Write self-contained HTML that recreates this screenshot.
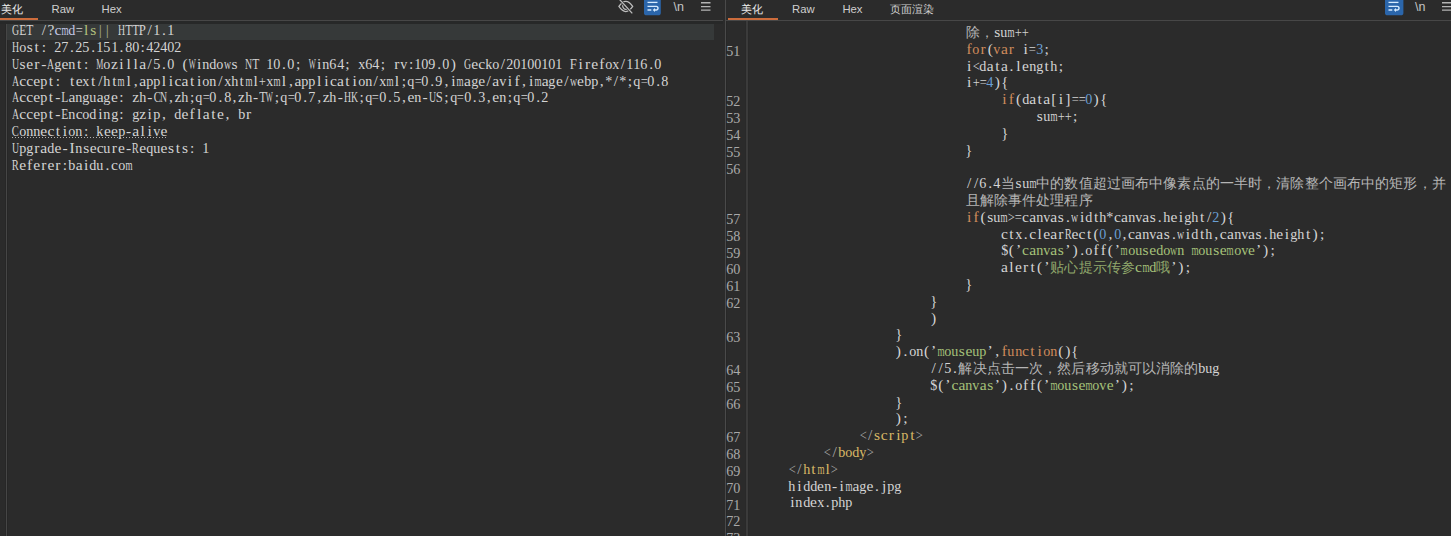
<!DOCTYPE html>
<html><head><meta charset="utf-8"><style>
html,body{margin:0;padding:0}
body{width:1451px;height:536px;overflow:hidden;position:relative;background:#2b2b2b}
.bx{position:absolute}
.r{position:absolute;white-space:nowrap;font-family:"Liberation Serif",serif;font-size:15.5px;line-height:17px;color:#d4d4d4}
.r b{font-weight:normal;display:inline-block;width:7.07px;text-align:center;white-space:pre}
.r b s{text-decoration:none;display:inline-block}
.r u{text-decoration:none;display:inline-block;width:14.14px;text-align:center;font-size:13.5px;position:relative;top:-0.5px;opacity:0.82}
.ln{color:#a9a9a9}
.tab{position:absolute;top:0;font-family:"Liberation Sans",sans-serif;font-size:11.3px;line-height:20px;color:#cfcfcf;white-space:pre}
</style></head><body>
<div class="bx" style="left:5px;top:21px;width:1px;height:515px;background:#272727"></div><div class="bx" style="left:6px;top:21px;width:1px;height:515px;background:#464646"></div><div class="bx" style="left:7px;top:21px;width:1px;height:515px;background:#272727"></div><div class="bx" style="left:745px;top:21px;width:1px;height:515px;background:#292929"></div><div class="bx" style="left:746px;top:21px;width:2px;height:515px;background:#3b3b3b"></div><div class="bx" style="left:748px;top:21px;width:1px;height:515px;background:#292929"></div><div class="bx" style="left:726px;top:21px;width:1px;height:515px;background:#272727"></div><div class="bx" style="left:7px;top:24px;width:706.5px;height:16px;background:#363939"></div><div class="bx" style="left:0;top:21px;width:722.5px;height:2.5px;background:#272828"></div><div class="r" style="left:12.00px;top:21.20px"><b><s style="margin-left:-2.06px;transform:scaleX(0.632)">G</s></b><b><s style="margin-left:-1.20px;transform:scaleX(0.747)">E</s></b><b><s style="margin-left:-1.20px;transform:scaleX(0.747)">T</s></b><b> </b><b>/</b><b>?</b><span style="color:#c3c8e6"><b>c</b><b><s style="margin-left:-2.49px;transform:scaleX(0.586)">m</s></b><b><s style="margin-left:-0.34px;transform:scaleX(0.912)">d</s></b></span><b><s style="margin-left:-0.84px;transform:scaleX(0.809)">=</s></b><span style="color:#b3c17f"><b>l</b><b>s</b></span><span style="color:#a7aa8e"><b>|</b><b>|</b></span><b> </b><b><s style="margin-left:-2.06px;transform:scaleX(0.632)">H</s></b><b><s style="margin-left:-1.20px;transform:scaleX(0.747)">T</s></b><b><s style="margin-left:-1.20px;transform:scaleX(0.747)">T</s></b><b><s style="margin-left:-0.78px;transform:scaleX(0.820)">P</s></b><b>/</b><b><s style="margin-left:-0.34px;transform:scaleX(0.912)">1</s></b><b>.</b><b><s style="margin-left:-0.34px;transform:scaleX(0.912)">1</s></b></div>
<div class="r" style="left:12.00px;top:38.00px"><b><s style="margin-left:-2.06px;transform:scaleX(0.632)">H</s></b><b><s style="margin-left:-0.34px;transform:scaleX(0.912)">o</s></b><b>s</b><b>t</b><b>:</b><b> </b><b><s style="margin-left:-0.34px;transform:scaleX(0.912)">2</s></b><b><s style="margin-left:-0.34px;transform:scaleX(0.912)">7</s></b><b>.</b><b><s style="margin-left:-0.34px;transform:scaleX(0.912)">2</s></b><b><s style="margin-left:-0.34px;transform:scaleX(0.912)">5</s></b><b>.</b><b><s style="margin-left:-0.34px;transform:scaleX(0.912)">1</s></b><b><s style="margin-left:-0.34px;transform:scaleX(0.912)">5</s></b><b><s style="margin-left:-0.34px;transform:scaleX(0.912)">1</s></b><b>.</b><b><s style="margin-left:-0.34px;transform:scaleX(0.912)">8</s></b><b><s style="margin-left:-0.34px;transform:scaleX(0.912)">0</s></b><b>:</b><b><s style="margin-left:-0.34px;transform:scaleX(0.912)">4</s></b><b><s style="margin-left:-0.34px;transform:scaleX(0.912)">2</s></b><b><s style="margin-left:-0.34px;transform:scaleX(0.912)">4</s></b><b><s style="margin-left:-0.34px;transform:scaleX(0.912)">0</s></b><b><s style="margin-left:-0.34px;transform:scaleX(0.912)">2</s></b></div>
<div class="r" style="left:12.00px;top:54.80px"><b><s style="margin-left:-2.06px;transform:scaleX(0.632)">U</s></b><b>s</b><b>e</b><b>r</b><b>-</b><b><s style="margin-left:-2.06px;transform:scaleX(0.632)">A</s></b><b><s style="margin-left:-0.34px;transform:scaleX(0.912)">g</s></b><b>e</b><b><s style="margin-left:-0.34px;transform:scaleX(0.912)">n</s></b><b>t</b><b>:</b><b> </b><b><s style="margin-left:-3.36px;transform:scaleX(0.513)">M</s></b><b><s style="margin-left:-0.34px;transform:scaleX(0.912)">o</s></b><b>z</b><b>i</b><b>l</b><b>l</b><b>a</b><b>/</b><b><s style="margin-left:-0.34px;transform:scaleX(0.912)">5</s></b><b>.</b><b><s style="margin-left:-0.34px;transform:scaleX(0.912)">0</s></b><b> </b><b>(</b><b><s style="margin-left:-3.78px;transform:scaleX(0.483)">W</s></b><b>i</b><b><s style="margin-left:-0.34px;transform:scaleX(0.912)">n</s></b><b><s style="margin-left:-0.34px;transform:scaleX(0.912)">d</s></b><b><s style="margin-left:-0.34px;transform:scaleX(0.912)">o</s></b><b><s style="margin-left:-2.06px;transform:scaleX(0.632)">w</s></b><b>s</b><b> </b><b><s style="margin-left:-2.06px;transform:scaleX(0.632)">N</s></b><b><s style="margin-left:-1.20px;transform:scaleX(0.747)">T</s></b><b> </b><b><s style="margin-left:-0.34px;transform:scaleX(0.912)">1</s></b><b><s style="margin-left:-0.34px;transform:scaleX(0.912)">0</s></b><b>.</b><b><s style="margin-left:-0.34px;transform:scaleX(0.912)">0</s></b><b>;</b><b> </b><b><s style="margin-left:-3.78px;transform:scaleX(0.483)">W</s></b><b>i</b><b><s style="margin-left:-0.34px;transform:scaleX(0.912)">n</s></b><b><s style="margin-left:-0.34px;transform:scaleX(0.912)">6</s></b><b><s style="margin-left:-0.34px;transform:scaleX(0.912)">4</s></b><b>;</b><b> </b><b><s style="margin-left:-0.34px;transform:scaleX(0.912)">x</s></b><b><s style="margin-left:-0.34px;transform:scaleX(0.912)">6</s></b><b><s style="margin-left:-0.34px;transform:scaleX(0.912)">4</s></b><b>;</b><b> </b><b>r</b><b><s style="margin-left:-0.34px;transform:scaleX(0.912)">v</s></b><b>:</b><b><s style="margin-left:-0.34px;transform:scaleX(0.912)">1</s></b><b><s style="margin-left:-0.34px;transform:scaleX(0.912)">0</s></b><b><s style="margin-left:-0.34px;transform:scaleX(0.912)">9</s></b><b>.</b><b><s style="margin-left:-0.34px;transform:scaleX(0.912)">0</s></b><b>)</b><b> </b><b><s style="margin-left:-2.06px;transform:scaleX(0.632)">G</s></b><b>e</b><b>c</b><b><s style="margin-left:-0.34px;transform:scaleX(0.912)">k</s></b><b><s style="margin-left:-0.34px;transform:scaleX(0.912)">o</s></b><b>/</b><b><s style="margin-left:-0.34px;transform:scaleX(0.912)">2</s></b><b><s style="margin-left:-0.34px;transform:scaleX(0.912)">0</s></b><b><s style="margin-left:-0.34px;transform:scaleX(0.912)">1</s></b><b><s style="margin-left:-0.34px;transform:scaleX(0.912)">0</s></b><b><s style="margin-left:-0.34px;transform:scaleX(0.912)">0</s></b><b><s style="margin-left:-0.34px;transform:scaleX(0.912)">1</s></b><b><s style="margin-left:-0.34px;transform:scaleX(0.912)">0</s></b><b><s style="margin-left:-0.34px;transform:scaleX(0.912)">1</s></b><b> </b><b><s style="margin-left:-0.78px;transform:scaleX(0.820)">F</s></b><b>i</b><b>r</b><b>e</b><b>f</b><b><s style="margin-left:-0.34px;transform:scaleX(0.912)">o</s></b><b><s style="margin-left:-0.34px;transform:scaleX(0.912)">x</s></b><b>/</b><b><s style="margin-left:-0.34px;transform:scaleX(0.912)">1</s></b><b><s style="margin-left:-0.34px;transform:scaleX(0.912)">1</s></b><b><s style="margin-left:-0.34px;transform:scaleX(0.912)">6</s></b><b>.</b><b><s style="margin-left:-0.34px;transform:scaleX(0.912)">0</s></b></div>
<div class="r" style="left:12.00px;top:71.60px"><b><s style="margin-left:-2.06px;transform:scaleX(0.632)">A</s></b><b>c</b><b>c</b><b>e</b><b><s style="margin-left:-0.34px;transform:scaleX(0.912)">p</s></b><b>t</b><b>:</b><b> </b><b>t</b><b>e</b><b><s style="margin-left:-0.34px;transform:scaleX(0.912)">x</s></b><b>t</b><b>/</b><b><s style="margin-left:-0.34px;transform:scaleX(0.912)">h</s></b><b>t</b><b><s style="margin-left:-2.49px;transform:scaleX(0.586)">m</s></b><b>l</b><b>,</b><b>a</b><b><s style="margin-left:-0.34px;transform:scaleX(0.912)">p</s></b><b><s style="margin-left:-0.34px;transform:scaleX(0.912)">p</s></b><b>l</b><b>i</b><b>c</b><b>a</b><b>t</b><b>i</b><b><s style="margin-left:-0.34px;transform:scaleX(0.912)">o</s></b><b><s style="margin-left:-0.34px;transform:scaleX(0.912)">n</s></b><b>/</b><b><s style="margin-left:-0.34px;transform:scaleX(0.912)">x</s></b><b><s style="margin-left:-0.34px;transform:scaleX(0.912)">h</s></b><b>t</b><b><s style="margin-left:-2.49px;transform:scaleX(0.586)">m</s></b><b>l</b><b><s style="margin-left:-0.84px;transform:scaleX(0.809)">+</s></b><b><s style="margin-left:-0.34px;transform:scaleX(0.912)">x</s></b><b><s style="margin-left:-2.49px;transform:scaleX(0.586)">m</s></b><b>l</b><b>,</b><b>a</b><b><s style="margin-left:-0.34px;transform:scaleX(0.912)">p</s></b><b><s style="margin-left:-0.34px;transform:scaleX(0.912)">p</s></b><b>l</b><b>i</b><b>c</b><b>a</b><b>t</b><b>i</b><b><s style="margin-left:-0.34px;transform:scaleX(0.912)">o</s></b><b><s style="margin-left:-0.34px;transform:scaleX(0.912)">n</s></b><b>/</b><b><s style="margin-left:-0.34px;transform:scaleX(0.912)">x</s></b><b><s style="margin-left:-2.49px;transform:scaleX(0.586)">m</s></b><b>l</b><b>;</b><b><s style="margin-left:-0.34px;transform:scaleX(0.912)">q</s></b><b><s style="margin-left:-0.84px;transform:scaleX(0.809)">=</s></b><b><s style="margin-left:-0.34px;transform:scaleX(0.912)">0</s></b><b>.</b><b><s style="margin-left:-0.34px;transform:scaleX(0.912)">9</s></b><b>,</b><b>i</b><b><s style="margin-left:-2.49px;transform:scaleX(0.586)">m</s></b><b>a</b><b><s style="margin-left:-0.34px;transform:scaleX(0.912)">g</s></b><b>e</b><b>/</b><b>a</b><b><s style="margin-left:-0.34px;transform:scaleX(0.912)">v</s></b><b>i</b><b>f</b><b>,</b><b>i</b><b><s style="margin-left:-2.49px;transform:scaleX(0.586)">m</s></b><b>a</b><b><s style="margin-left:-0.34px;transform:scaleX(0.912)">g</s></b><b>e</b><b>/</b><b><s style="margin-left:-2.06px;transform:scaleX(0.632)">w</s></b><b>e</b><b><s style="margin-left:-0.34px;transform:scaleX(0.912)">b</s></b><b><s style="margin-left:-0.34px;transform:scaleX(0.912)">p</s></b><b>,</b><b><s style="margin-left:-0.34px;transform:scaleX(0.912)">*</s></b><b>/</b><b><s style="margin-left:-0.34px;transform:scaleX(0.912)">*</s></b><b>;</b><b><s style="margin-left:-0.34px;transform:scaleX(0.912)">q</s></b><b><s style="margin-left:-0.84px;transform:scaleX(0.809)">=</s></b><b><s style="margin-left:-0.34px;transform:scaleX(0.912)">0</s></b><b>.</b><b><s style="margin-left:-0.34px;transform:scaleX(0.912)">8</s></b></div>
<div class="r" style="left:12.00px;top:88.40px"><b><s style="margin-left:-2.06px;transform:scaleX(0.632)">A</s></b><b>c</b><b>c</b><b>e</b><b><s style="margin-left:-0.34px;transform:scaleX(0.912)">p</s></b><b>t</b><b>-</b><b><s style="margin-left:-1.20px;transform:scaleX(0.747)">L</s></b><b>a</b><b><s style="margin-left:-0.34px;transform:scaleX(0.912)">n</s></b><b><s style="margin-left:-0.34px;transform:scaleX(0.912)">g</s></b><b><s style="margin-left:-0.34px;transform:scaleX(0.912)">u</s></b><b>a</b><b><s style="margin-left:-0.34px;transform:scaleX(0.912)">g</s></b><b>e</b><b>:</b><b> </b><b>z</b><b><s style="margin-left:-0.34px;transform:scaleX(0.912)">h</s></b><b>-</b><b><s style="margin-left:-1.63px;transform:scaleX(0.684)">C</s></b><b><s style="margin-left:-2.06px;transform:scaleX(0.632)">N</s></b><b>,</b><b>z</b><b><s style="margin-left:-0.34px;transform:scaleX(0.912)">h</s></b><b>;</b><b><s style="margin-left:-0.34px;transform:scaleX(0.912)">q</s></b><b><s style="margin-left:-0.84px;transform:scaleX(0.809)">=</s></b><b><s style="margin-left:-0.34px;transform:scaleX(0.912)">0</s></b><b>.</b><b><s style="margin-left:-0.34px;transform:scaleX(0.912)">8</s></b><b>,</b><b>z</b><b><s style="margin-left:-0.34px;transform:scaleX(0.912)">h</s></b><b>-</b><b><s style="margin-left:-1.20px;transform:scaleX(0.747)">T</s></b><b><s style="margin-left:-3.78px;transform:scaleX(0.483)">W</s></b><b>;</b><b><s style="margin-left:-0.34px;transform:scaleX(0.912)">q</s></b><b><s style="margin-left:-0.84px;transform:scaleX(0.809)">=</s></b><b><s style="margin-left:-0.34px;transform:scaleX(0.912)">0</s></b><b>.</b><b><s style="margin-left:-0.34px;transform:scaleX(0.912)">7</s></b><b>,</b><b>z</b><b><s style="margin-left:-0.34px;transform:scaleX(0.912)">h</s></b><b>-</b><b><s style="margin-left:-2.06px;transform:scaleX(0.632)">H</s></b><b><s style="margin-left:-2.06px;transform:scaleX(0.632)">K</s></b><b>;</b><b><s style="margin-left:-0.34px;transform:scaleX(0.912)">q</s></b><b><s style="margin-left:-0.84px;transform:scaleX(0.809)">=</s></b><b><s style="margin-left:-0.34px;transform:scaleX(0.912)">0</s></b><b>.</b><b><s style="margin-left:-0.34px;transform:scaleX(0.912)">5</s></b><b>,</b><b>e</b><b><s style="margin-left:-0.34px;transform:scaleX(0.912)">n</s></b><b>-</b><b><s style="margin-left:-2.06px;transform:scaleX(0.632)">U</s></b><b><s style="margin-left:-0.78px;transform:scaleX(0.820)">S</s></b><b>;</b><b><s style="margin-left:-0.34px;transform:scaleX(0.912)">q</s></b><b><s style="margin-left:-0.84px;transform:scaleX(0.809)">=</s></b><b><s style="margin-left:-0.34px;transform:scaleX(0.912)">0</s></b><b>.</b><b><s style="margin-left:-0.34px;transform:scaleX(0.912)">3</s></b><b>,</b><b>e</b><b><s style="margin-left:-0.34px;transform:scaleX(0.912)">n</s></b><b>;</b><b><s style="margin-left:-0.34px;transform:scaleX(0.912)">q</s></b><b><s style="margin-left:-0.84px;transform:scaleX(0.809)">=</s></b><b><s style="margin-left:-0.34px;transform:scaleX(0.912)">0</s></b><b>.</b><b><s style="margin-left:-0.34px;transform:scaleX(0.912)">2</s></b></div>
<div class="r" style="left:12.00px;top:105.20px"><b><s style="margin-left:-2.06px;transform:scaleX(0.632)">A</s></b><b>c</b><b>c</b><b>e</b><b><s style="margin-left:-0.34px;transform:scaleX(0.912)">p</s></b><b>t</b><b>-</b><b><s style="margin-left:-1.20px;transform:scaleX(0.747)">E</s></b><b><s style="margin-left:-0.34px;transform:scaleX(0.912)">n</s></b><b>c</b><b><s style="margin-left:-0.34px;transform:scaleX(0.912)">o</s></b><b><s style="margin-left:-0.34px;transform:scaleX(0.912)">d</s></b><b>i</b><b><s style="margin-left:-0.34px;transform:scaleX(0.912)">n</s></b><b><s style="margin-left:-0.34px;transform:scaleX(0.912)">g</s></b><b>:</b><b> </b><b><s style="margin-left:-0.34px;transform:scaleX(0.912)">g</s></b><b>z</b><b>i</b><b><s style="margin-left:-0.34px;transform:scaleX(0.912)">p</s></b><b>,</b><b> </b><b><s style="margin-left:-0.34px;transform:scaleX(0.912)">d</s></b><b>e</b><b>f</b><b>l</b><b>a</b><b>t</b><b>e</b><b>,</b><b> </b><b><s style="margin-left:-0.34px;transform:scaleX(0.912)">b</s></b><b>r</b></div>
<div class="r" style="left:12.00px;top:122.00px"><b><s style="margin-left:-1.63px;transform:scaleX(0.684)">C</s></b><b><s style="margin-left:-0.34px;transform:scaleX(0.912)">o</s></b><b><s style="margin-left:-0.34px;transform:scaleX(0.912)">n</s></b><b><s style="margin-left:-0.34px;transform:scaleX(0.912)">n</s></b><b>e</b><b>c</b><b>t</b><b>i</b><b><s style="margin-left:-0.34px;transform:scaleX(0.912)">o</s></b><b><s style="margin-left:-0.34px;transform:scaleX(0.912)">n</s></b><b>:</b><b> </b><b><s style="margin-left:-0.34px;transform:scaleX(0.912)">k</s></b><b>e</b><b>e</b><b><s style="margin-left:-0.34px;transform:scaleX(0.912)">p</s></b><b>-</b><b>a</b><b>l</b><b>i</b><b><s style="margin-left:-0.34px;transform:scaleX(0.912)">v</s></b><b>e</b></div>
<div class="r" style="left:12.00px;top:138.80px"><b><s style="margin-left:-2.06px;transform:scaleX(0.632)">U</s></b><b><s style="margin-left:-0.34px;transform:scaleX(0.912)">p</s></b><b><s style="margin-left:-0.34px;transform:scaleX(0.912)">g</s></b><b>r</b><b>a</b><b><s style="margin-left:-0.34px;transform:scaleX(0.912)">d</s></b><b>e</b><b>-</b><b>I</b><b><s style="margin-left:-0.34px;transform:scaleX(0.912)">n</s></b><b>s</b><b>e</b><b>c</b><b><s style="margin-left:-0.34px;transform:scaleX(0.912)">u</s></b><b>r</b><b>e</b><b>-</b><b><s style="margin-left:-1.63px;transform:scaleX(0.684)">R</s></b><b>e</b><b><s style="margin-left:-0.34px;transform:scaleX(0.912)">q</s></b><b><s style="margin-left:-0.34px;transform:scaleX(0.912)">u</s></b><b>e</b><b>s</b><b>t</b><b>s</b><b>:</b><b> </b><b><s style="margin-left:-0.34px;transform:scaleX(0.912)">1</s></b></div>
<div class="r" style="left:12.00px;top:155.60px"><b><s style="margin-left:-1.63px;transform:scaleX(0.684)">R</s></b><b>e</b><b>f</b><b>e</b><b>r</b><b>e</b><b>r</b><b>:</b><b><s style="margin-left:-0.34px;transform:scaleX(0.912)">b</s></b><b>a</b><b>i</b><b><s style="margin-left:-0.34px;transform:scaleX(0.912)">d</s></b><b><s style="margin-left:-0.34px;transform:scaleX(0.912)">u</s></b><b>.</b><b>c</b><b><s style="margin-left:-0.34px;transform:scaleX(0.912)">o</s></b><b><s style="margin-left:-2.49px;transform:scaleX(0.586)">m</s></b></div>
<div class="bx" style="left:12px;top:137px;width:156px;height:1px;background:repeating-linear-gradient(90deg,#b0b0b0 0 1px,transparent 1px 3px)"></div><div class="r" style="left:965.50px;top:3.70px"><b>/</b><b>/</b><b><s style="margin-left:-0.34px;transform:scaleX(0.912)">6</s></b><b>.</b><b><s style="margin-left:-0.34px;transform:scaleX(0.912)">3</s></b><u>遍</u><u>历</u><u>数</u><u>组</u><u>中</u><u>的</u><u>像</u><u>素</u><u>点</u><u>，</u><u>判</u><u>断</u><u>透</u><u>明</u><u>度</u><u>是</u><u>否</u><u>为</u><b><s style="margin-left:-0.34px;transform:scaleX(0.912)">0</s></b><u>，</u><u>如</u><u>果</u><u>为</u><b><s style="margin-left:-0.34px;transform:scaleX(0.912)">0</s></b><u>说</u><u>明</u><u>已</u><u>经</u><u>被</u><u>清</u></div>
<div class="r" style="left:965.50px;top:23.00px"><u>除</u><u>，</u><b>s</b><b><s style="margin-left:-0.34px;transform:scaleX(0.912)">u</s></b><b><s style="margin-left:-2.49px;transform:scaleX(0.586)">m</s></b><b><s style="margin-left:-0.84px;transform:scaleX(0.809)">+</s></b><b><s style="margin-left:-0.84px;transform:scaleX(0.809)">+</s></b></div>
<div class="r" style="left:965.50px;top:39.80px"><span style="color:#d08b5c"><b>f</b><b><s style="margin-left:-0.34px;transform:scaleX(0.912)">o</s></b><b>r</b></span><b>(</b><span style="color:#d08b5c"><b><s style="margin-left:-0.34px;transform:scaleX(0.912)">v</s></b><b>a</b><b>r</b></span><b> </b><b>i</b><b><s style="margin-left:-0.84px;transform:scaleX(0.809)">=</s></b><span style="color:#6a9fd4"><b><s style="margin-left:-0.34px;transform:scaleX(0.912)">3</s></b></span><b>;</b></div>
<div class="r ln" style="left:726.5px;top:42.00px"><b><s style="margin-left:-0.34px;transform:scaleX(0.912)">5</s></b><b><s style="margin-left:-0.34px;transform:scaleX(0.912)">1</s></b></div>
<div class="r" style="left:965.50px;top:56.60px"><b>i</b><b><s style="margin-left:-0.84px;transform:scaleX(0.809)">&lt;</s></b><b><s style="margin-left:-0.34px;transform:scaleX(0.912)">d</s></b><b>a</b><b>t</b><b>a</b><b>.</b><b>l</b><b>e</b><b><s style="margin-left:-0.34px;transform:scaleX(0.912)">n</s></b><b><s style="margin-left:-0.34px;transform:scaleX(0.912)">g</s></b><b>t</b><b><s style="margin-left:-0.34px;transform:scaleX(0.912)">h</s></b><b>;</b></div>
<div class="r" style="left:965.50px;top:73.40px"><b>i</b><b><s style="margin-left:-0.84px;transform:scaleX(0.809)">+</s></b><b><s style="margin-left:-0.84px;transform:scaleX(0.809)">=</s></b><span style="color:#6a9fd4"><b><s style="margin-left:-0.34px;transform:scaleX(0.912)">4</s></b></span><b>)</b><b><s style="margin-left:-0.18px;transform:scaleX(0.950)">{</s></b></div>
<div class="r" style="left:1000.85px;top:90.20px"><span style="color:#d08b5c"><b>i</b><b>f</b></span><b>(</b><b><s style="margin-left:-0.34px;transform:scaleX(0.912)">d</s></b><b>a</b><b>t</b><b>a</b><b>[</b><b>i</b><b>]</b><b><s style="margin-left:-0.84px;transform:scaleX(0.809)">=</s></b><b><s style="margin-left:-0.84px;transform:scaleX(0.809)">=</s></b><span style="color:#6a9fd4"><b><s style="margin-left:-0.34px;transform:scaleX(0.912)">0</s></b></span><b>)</b><b><s style="margin-left:-0.18px;transform:scaleX(0.950)">{</s></b></div>
<div class="r ln" style="left:726.5px;top:92.40px"><b><s style="margin-left:-0.34px;transform:scaleX(0.912)">5</s></b><b><s style="margin-left:-0.34px;transform:scaleX(0.912)">2</s></b></div>
<div class="r" style="left:1036.20px;top:107.00px"><b>s</b><b><s style="margin-left:-0.34px;transform:scaleX(0.912)">u</s></b><b><s style="margin-left:-2.49px;transform:scaleX(0.586)">m</s></b><b><s style="margin-left:-0.84px;transform:scaleX(0.809)">+</s></b><b><s style="margin-left:-0.84px;transform:scaleX(0.809)">+</s></b><b>;</b></div>
<div class="r ln" style="left:726.5px;top:109.20px"><b><s style="margin-left:-0.34px;transform:scaleX(0.912)">5</s></b><b><s style="margin-left:-0.34px;transform:scaleX(0.912)">3</s></b></div>
<div class="r" style="left:1000.85px;top:123.80px"><b><s style="margin-left:-0.18px;transform:scaleX(0.950)">}</s></b></div>
<div class="r ln" style="left:726.5px;top:126.00px"><b><s style="margin-left:-0.34px;transform:scaleX(0.912)">5</s></b><b><s style="margin-left:-0.34px;transform:scaleX(0.912)">4</s></b></div>
<div class="r" style="left:965.50px;top:140.60px"><b><s style="margin-left:-0.18px;transform:scaleX(0.950)">}</s></b></div>
<div class="r ln" style="left:726.5px;top:142.80px"><b><s style="margin-left:-0.34px;transform:scaleX(0.912)">5</s></b><b><s style="margin-left:-0.34px;transform:scaleX(0.912)">5</s></b></div>
<div class="r ln" style="left:726.5px;top:159.60px"><b><s style="margin-left:-0.34px;transform:scaleX(0.912)">5</s></b><b><s style="margin-left:-0.34px;transform:scaleX(0.912)">6</s></b></div>
<div class="r" style="left:965.50px;top:174.20px"><b>/</b><b>/</b><b><s style="margin-left:-0.34px;transform:scaleX(0.912)">6</s></b><b>.</b><b><s style="margin-left:-0.34px;transform:scaleX(0.912)">4</s></b><u>当</u><b>s</b><b><s style="margin-left:-0.34px;transform:scaleX(0.912)">u</s></b><b><s style="margin-left:-2.49px;transform:scaleX(0.586)">m</s></b><u>中</u><u>的</u><u>数</u><u>值</u><u>超</u><u>过</u><u>画</u><u>布</u><u>中</u><u>像</u><u>素</u><u>点</u><u>的</u><u>一</u><u>半</u><u>时</u><u>，</u><u>清</u><u>除</u><u>整</u><u>个</u><u>画</u><u>布</u><u>中</u><u>的</u><u>矩</u><u>形</u><u>，</u><u>并</u></div>
<div class="r" style="left:965.50px;top:191.00px"><u>且</u><u>解</u><u>除</u><u>事</u><u>件</u><u>处</u><u>理</u><u>程</u><u>序</u></div>
<div class="r" style="left:965.50px;top:207.80px"><span style="color:#d08b5c"><b>i</b><b>f</b></span><b>(</b><b>s</b><b><s style="margin-left:-0.34px;transform:scaleX(0.912)">u</s></b><b><s style="margin-left:-2.49px;transform:scaleX(0.586)">m</s></b><b><s style="margin-left:-0.84px;transform:scaleX(0.809)">&gt;</s></b><b><s style="margin-left:-0.84px;transform:scaleX(0.809)">=</s></b><b>c</b><b>a</b><b><s style="margin-left:-0.34px;transform:scaleX(0.912)">n</s></b><b><s style="margin-left:-0.34px;transform:scaleX(0.912)">v</s></b><b>a</b><b>s</b><b>.</b><b><s style="margin-left:-2.06px;transform:scaleX(0.632)">w</s></b><b>i</b><b><s style="margin-left:-0.34px;transform:scaleX(0.912)">d</s></b><b>t</b><b><s style="margin-left:-0.34px;transform:scaleX(0.912)">h</s></b><b><s style="margin-left:-0.34px;transform:scaleX(0.912)">*</s></b><b>c</b><b>a</b><b><s style="margin-left:-0.34px;transform:scaleX(0.912)">n</s></b><b><s style="margin-left:-0.34px;transform:scaleX(0.912)">v</s></b><b>a</b><b>s</b><b>.</b><b><s style="margin-left:-0.34px;transform:scaleX(0.912)">h</s></b><b>e</b><b>i</b><b><s style="margin-left:-0.34px;transform:scaleX(0.912)">g</s></b><b><s style="margin-left:-0.34px;transform:scaleX(0.912)">h</s></b><b>t</b><b>/</b><span style="color:#6a9fd4"><b><s style="margin-left:-0.34px;transform:scaleX(0.912)">2</s></b></span><b>)</b><b><s style="margin-left:-0.18px;transform:scaleX(0.950)">{</s></b></div>
<div class="r ln" style="left:726.5px;top:210.00px"><b><s style="margin-left:-0.34px;transform:scaleX(0.912)">5</s></b><b><s style="margin-left:-0.34px;transform:scaleX(0.912)">7</s></b></div>
<div class="r" style="left:1000.85px;top:224.60px"><b>c</b><b>t</b><b><s style="margin-left:-0.34px;transform:scaleX(0.912)">x</s></b><b>.</b><b>c</b><b>l</b><b>e</b><b>a</b><b>r</b><b><s style="margin-left:-1.63px;transform:scaleX(0.684)">R</s></b><b>e</b><b>c</b><b>t</b><b>(</b><span style="color:#6a9fd4"><b><s style="margin-left:-0.34px;transform:scaleX(0.912)">0</s></b></span><b>,</b><span style="color:#6a9fd4"><b><s style="margin-left:-0.34px;transform:scaleX(0.912)">0</s></b></span><b>,</b><b>c</b><b>a</b><b><s style="margin-left:-0.34px;transform:scaleX(0.912)">n</s></b><b><s style="margin-left:-0.34px;transform:scaleX(0.912)">v</s></b><b>a</b><b>s</b><b>.</b><b><s style="margin-left:-2.06px;transform:scaleX(0.632)">w</s></b><b>i</b><b><s style="margin-left:-0.34px;transform:scaleX(0.912)">d</s></b><b>t</b><b><s style="margin-left:-0.34px;transform:scaleX(0.912)">h</s></b><b>,</b><b>c</b><b>a</b><b><s style="margin-left:-0.34px;transform:scaleX(0.912)">n</s></b><b><s style="margin-left:-0.34px;transform:scaleX(0.912)">v</s></b><b>a</b><b>s</b><b>.</b><b><s style="margin-left:-0.34px;transform:scaleX(0.912)">h</s></b><b>e</b><b>i</b><b><s style="margin-left:-0.34px;transform:scaleX(0.912)">g</s></b><b><s style="margin-left:-0.34px;transform:scaleX(0.912)">h</s></b><b>t</b><b>)</b><b>;</b></div>
<div class="r ln" style="left:726.5px;top:226.80px"><b><s style="margin-left:-0.34px;transform:scaleX(0.912)">5</s></b><b><s style="margin-left:-0.34px;transform:scaleX(0.912)">8</s></b></div>
<div class="r" style="left:1000.85px;top:241.40px"><b><s style="margin-left:-0.34px;transform:scaleX(0.912)">$</s></b><b>(</b><b>’</b><span style="color:#a6c27a"><b>c</b><b>a</b><b><s style="margin-left:-0.34px;transform:scaleX(0.912)">n</s></b><b><s style="margin-left:-0.34px;transform:scaleX(0.912)">v</s></b><b>a</b><b>s</b></span><b>’</b><b>)</b><b>.</b><b><s style="margin-left:-0.34px;transform:scaleX(0.912)">o</s></b><b>f</b><b>f</b><b>(</b><b>’</b><span style="color:#a6c27a"><b><s style="margin-left:-2.49px;transform:scaleX(0.586)">m</s></b><b><s style="margin-left:-0.34px;transform:scaleX(0.912)">o</s></b><b><s style="margin-left:-0.34px;transform:scaleX(0.912)">u</s></b><b>s</b><b>e</b><b><s style="margin-left:-0.34px;transform:scaleX(0.912)">d</s></b><b><s style="margin-left:-0.34px;transform:scaleX(0.912)">o</s></b><b><s style="margin-left:-2.06px;transform:scaleX(0.632)">w</s></b><b><s style="margin-left:-0.34px;transform:scaleX(0.912)">n</s></b><b> </b><b><s style="margin-left:-2.49px;transform:scaleX(0.586)">m</s></b><b><s style="margin-left:-0.34px;transform:scaleX(0.912)">o</s></b><b><s style="margin-left:-0.34px;transform:scaleX(0.912)">u</s></b><b>s</b><b>e</b><b><s style="margin-left:-2.49px;transform:scaleX(0.586)">m</s></b><b><s style="margin-left:-0.34px;transform:scaleX(0.912)">o</s></b><b><s style="margin-left:-0.34px;transform:scaleX(0.912)">v</s></b><b>e</b></span><b>’</b><b>)</b><b>;</b></div>
<div class="r ln" style="left:726.5px;top:243.60px"><b><s style="margin-left:-0.34px;transform:scaleX(0.912)">5</s></b><b><s style="margin-left:-0.34px;transform:scaleX(0.912)">9</s></b></div>
<div class="r" style="left:1000.85px;top:258.20px"><b>a</b><b>l</b><b>e</b><b>r</b><b>t</b><b>(</b><b>’</b><span style="color:#a6c27a"><u>贴</u><u>心</u><u>提</u><u>示</u><u>传</u><u>参</u><b>c</b><b><s style="margin-left:-2.49px;transform:scaleX(0.586)">m</s></b><b><s style="margin-left:-0.34px;transform:scaleX(0.912)">d</s></b><u>哦</u></span><b>’</b><b>)</b><b>;</b></div>
<div class="r ln" style="left:726.5px;top:260.40px"><b><s style="margin-left:-0.34px;transform:scaleX(0.912)">6</s></b><b><s style="margin-left:-0.34px;transform:scaleX(0.912)">0</s></b></div>
<div class="r" style="left:965.50px;top:275.00px"><b><s style="margin-left:-0.18px;transform:scaleX(0.950)">}</s></b></div>
<div class="r ln" style="left:726.5px;top:277.20px"><b><s style="margin-left:-0.34px;transform:scaleX(0.912)">6</s></b><b><s style="margin-left:-0.34px;transform:scaleX(0.912)">1</s></b></div>
<div class="r" style="left:930.15px;top:291.80px"><b><s style="margin-left:-0.18px;transform:scaleX(0.950)">}</s></b></div>
<div class="r ln" style="left:726.5px;top:294.00px"><b><s style="margin-left:-0.34px;transform:scaleX(0.912)">6</s></b><b><s style="margin-left:-0.34px;transform:scaleX(0.912)">2</s></b></div>
<div class="r" style="left:930.15px;top:308.60px"><b>)</b></div>
<div class="r" style="left:894.80px;top:325.40px"><b><s style="margin-left:-0.18px;transform:scaleX(0.950)">}</s></b></div>
<div class="r ln" style="left:726.5px;top:327.60px"><b><s style="margin-left:-0.34px;transform:scaleX(0.912)">6</s></b><b><s style="margin-left:-0.34px;transform:scaleX(0.912)">3</s></b></div>
<div class="r" style="left:894.80px;top:342.20px"><b>)</b><b>.</b><b><s style="margin-left:-0.34px;transform:scaleX(0.912)">o</s></b><b><s style="margin-left:-0.34px;transform:scaleX(0.912)">n</s></b><b>(</b><b>’</b><span style="color:#a6c27a"><b><s style="margin-left:-2.49px;transform:scaleX(0.586)">m</s></b><b><s style="margin-left:-0.34px;transform:scaleX(0.912)">o</s></b><b><s style="margin-left:-0.34px;transform:scaleX(0.912)">u</s></b><b>s</b><b>e</b><b><s style="margin-left:-0.34px;transform:scaleX(0.912)">u</s></b><b><s style="margin-left:-0.34px;transform:scaleX(0.912)">p</s></b></span><b>’</b><b>,</b><span style="color:#d08b5c"><b>f</b><b><s style="margin-left:-0.34px;transform:scaleX(0.912)">u</s></b><b><s style="margin-left:-0.34px;transform:scaleX(0.912)">n</s></b><b>c</b><b>t</b><b>i</b><b><s style="margin-left:-0.34px;transform:scaleX(0.912)">o</s></b><b><s style="margin-left:-0.34px;transform:scaleX(0.912)">n</s></b></span><b>(</b><b>)</b><b><s style="margin-left:-0.18px;transform:scaleX(0.950)">{</s></b></div>
<div class="r" style="left:930.15px;top:359.00px"><b>/</b><b>/</b><b><s style="margin-left:-0.34px;transform:scaleX(0.912)">5</s></b><b>.</b><u>解</u><u>决</u><u>点</u><u>击</u><u>一</u><u>次</u><u>，</u><u>然</u><u>后</u><u>移</u><u>动</u><u>就</u><u>可</u><u>以</u><u>消</u><u>除</u><u>的</u><b><s style="margin-left:-0.34px;transform:scaleX(0.912)">b</s></b><b><s style="margin-left:-0.34px;transform:scaleX(0.912)">u</s></b><b><s style="margin-left:-0.34px;transform:scaleX(0.912)">g</s></b></div>
<div class="r ln" style="left:726.5px;top:361.20px"><b><s style="margin-left:-0.34px;transform:scaleX(0.912)">6</s></b><b><s style="margin-left:-0.34px;transform:scaleX(0.912)">4</s></b></div>
<div class="r" style="left:930.15px;top:375.80px"><b><s style="margin-left:-0.34px;transform:scaleX(0.912)">$</s></b><b>(</b><b>’</b><span style="color:#a6c27a"><b>c</b><b>a</b><b><s style="margin-left:-0.34px;transform:scaleX(0.912)">n</s></b><b><s style="margin-left:-0.34px;transform:scaleX(0.912)">v</s></b><b>a</b><b>s</b></span><b>’</b><b>)</b><b>.</b><b><s style="margin-left:-0.34px;transform:scaleX(0.912)">o</s></b><b>f</b><b>f</b><b>(</b><b>’</b><span style="color:#a6c27a"><b><s style="margin-left:-2.49px;transform:scaleX(0.586)">m</s></b><b><s style="margin-left:-0.34px;transform:scaleX(0.912)">o</s></b><b><s style="margin-left:-0.34px;transform:scaleX(0.912)">u</s></b><b>s</b><b>e</b><b><s style="margin-left:-2.49px;transform:scaleX(0.586)">m</s></b><b><s style="margin-left:-0.34px;transform:scaleX(0.912)">o</s></b><b><s style="margin-left:-0.34px;transform:scaleX(0.912)">v</s></b><b>e</b></span><b>’</b><b>)</b><b>;</b></div>
<div class="r ln" style="left:726.5px;top:378.00px"><b><s style="margin-left:-0.34px;transform:scaleX(0.912)">6</s></b><b><s style="margin-left:-0.34px;transform:scaleX(0.912)">5</s></b></div>
<div class="r" style="left:894.80px;top:392.60px"><b><s style="margin-left:-0.18px;transform:scaleX(0.950)">}</s></b></div>
<div class="r ln" style="left:726.5px;top:394.80px"><b><s style="margin-left:-0.34px;transform:scaleX(0.912)">6</s></b><b><s style="margin-left:-0.34px;transform:scaleX(0.912)">6</s></b></div>
<div class="r" style="left:894.80px;top:409.40px"><b>)</b><b>;</b></div>
<div class="r" style="left:859.45px;top:426.20px"><span style="color:#a8a8a8"><b><s style="margin-left:-0.84px;transform:scaleX(0.809)">&lt;</s></b><b>/</b></span><span style="color:#d8b866"><b>s</b><b>c</b><b>r</b><b>i</b><b><s style="margin-left:-0.34px;transform:scaleX(0.912)">p</s></b><b>t</b></span><span style="color:#a8a8a8"><b><s style="margin-left:-0.84px;transform:scaleX(0.809)">&gt;</s></b></span></div>
<div class="r ln" style="left:726.5px;top:428.40px"><b><s style="margin-left:-0.34px;transform:scaleX(0.912)">6</s></b><b><s style="margin-left:-0.34px;transform:scaleX(0.912)">7</s></b></div>
<div class="r" style="left:824.10px;top:443.00px"><span style="color:#a8a8a8"><b><s style="margin-left:-0.84px;transform:scaleX(0.809)">&lt;</s></b><b>/</b></span><span style="color:#d8b866"><b><s style="margin-left:-0.34px;transform:scaleX(0.912)">b</s></b><b><s style="margin-left:-0.34px;transform:scaleX(0.912)">o</s></b><b><s style="margin-left:-0.34px;transform:scaleX(0.912)">d</s></b><b><s style="margin-left:-0.34px;transform:scaleX(0.912)">y</s></b></span><span style="color:#a8a8a8"><b><s style="margin-left:-0.84px;transform:scaleX(0.809)">&gt;</s></b></span></div>
<div class="r ln" style="left:726.5px;top:445.20px"><b><s style="margin-left:-0.34px;transform:scaleX(0.912)">6</s></b><b><s style="margin-left:-0.34px;transform:scaleX(0.912)">8</s></b></div>
<div class="r" style="left:788.75px;top:459.80px"><span style="color:#a8a8a8"><b><s style="margin-left:-0.84px;transform:scaleX(0.809)">&lt;</s></b><b>/</b></span><span style="color:#d8b866"><b><s style="margin-left:-0.34px;transform:scaleX(0.912)">h</s></b><b>t</b><b><s style="margin-left:-2.49px;transform:scaleX(0.586)">m</s></b><b>l</b></span><span style="color:#a8a8a8"><b><s style="margin-left:-0.84px;transform:scaleX(0.809)">&gt;</s></b></span></div>
<div class="r ln" style="left:726.5px;top:462.00px"><b><s style="margin-left:-0.34px;transform:scaleX(0.912)">6</s></b><b><s style="margin-left:-0.34px;transform:scaleX(0.912)">9</s></b></div>
<div class="r" style="left:788.75px;top:476.60px"><b><s style="margin-left:-0.34px;transform:scaleX(0.912)">h</s></b><b>i</b><b><s style="margin-left:-0.34px;transform:scaleX(0.912)">d</s></b><b><s style="margin-left:-0.34px;transform:scaleX(0.912)">d</s></b><b>e</b><b><s style="margin-left:-0.34px;transform:scaleX(0.912)">n</s></b><b>-</b><b>i</b><b><s style="margin-left:-2.49px;transform:scaleX(0.586)">m</s></b><b>a</b><b><s style="margin-left:-0.34px;transform:scaleX(0.912)">g</s></b><b>e</b><b>.</b><b>j</b><b><s style="margin-left:-0.34px;transform:scaleX(0.912)">p</s></b><b><s style="margin-left:-0.34px;transform:scaleX(0.912)">g</s></b></div>
<div class="r ln" style="left:726.5px;top:478.80px"><b><s style="margin-left:-0.34px;transform:scaleX(0.912)">7</s></b><b><s style="margin-left:-0.34px;transform:scaleX(0.912)">0</s></b></div>
<div class="r" style="left:788.75px;top:493.40px"><b>i</b><b><s style="margin-left:-0.34px;transform:scaleX(0.912)">n</s></b><b><s style="margin-left:-0.34px;transform:scaleX(0.912)">d</s></b><b>e</b><b><s style="margin-left:-0.34px;transform:scaleX(0.912)">x</s></b><b>.</b><b><s style="margin-left:-0.34px;transform:scaleX(0.912)">p</s></b><b><s style="margin-left:-0.34px;transform:scaleX(0.912)">h</s></b><b><s style="margin-left:-0.34px;transform:scaleX(0.912)">p</s></b></div>
<div class="r ln" style="left:726.5px;top:495.60px"><b><s style="margin-left:-0.34px;transform:scaleX(0.912)">7</s></b><b><s style="margin-left:-0.34px;transform:scaleX(0.912)">1</s></b></div>
<div class="r ln" style="left:726.5px;top:512.40px"><b><s style="margin-left:-0.34px;transform:scaleX(0.912)">7</s></b><b><s style="margin-left:-0.34px;transform:scaleX(0.912)">2</s></b></div>
<div class="r ln" style="left:726.5px;top:529.20px"><b><s style="margin-left:-0.34px;transform:scaleX(0.912)">7</s></b><b><s style="margin-left:-0.34px;transform:scaleX(0.912)">3</s></b></div>
<div class="bx" style="left:0;top:0;width:1451px;height:20px;background:#2b2b2b"></div>
<div class="tab" style="left:0.5px;top:-1px;color:#ececec">美化</div>
<div class="tab" style="left:51.5px;top:-1px">Raw</div>
<div class="tab" style="left:101.5px;top:-1px">Hex</div>
<div class="bx" style="left:0;top:17.5px;width:37.5px;height:2.5px;background:#cc6c3c"></div>
<div class="bx" style="left:0;top:20px;width:722.5px;height:1px;background:#474747"></div>
<svg class="bx" style="left:617px;top:-2px" width="18" height="18" viewBox="0 0 18 18"><path d="M1.9 8.4Q8.8 -1.6 15.7 8.4Q8.8 18.6 1.9 8.4Z" stroke="#bdbdbd" stroke-width="1.25" fill="none"/><path d="M6.4 6.4A3 3 0 0 0 10.6 10.6" stroke="#bdbdbd" stroke-width="1.2" fill="none"/><path d="M2.3 1.2L15.3 15.4" stroke="#2b2b2b" stroke-width="2.6"/><path d="M2.3 1.2L15.3 15.4" stroke="#bdbdbd" stroke-width="1.3"/></svg>
<svg class="bx" style="left:643.5px;top:-3px" width="19" height="19" viewBox="0 0 19 19"><rect x="0" y="0" width="16.8" height="18.3" rx="2.6" fill="#2b66ab"/><path d="M3.5 5.4H13.5" stroke="#d6ebff" stroke-width="1.3" fill="none"/><path d="M3.5 9.4H12.2a1.8 1.8 0 0 1 0 3.6H10.6" stroke="#d6ebff" stroke-width="1.4" fill="none"/><path d="M8.7 13l2.3-1.9v3.8z" fill="#d6ebff"/><path d="M3.5 13H7.3" stroke="#d6ebff" stroke-width="1.5" fill="none"/></svg>
<div class="tab" style="left:673.5px;top:-3.5px;font-size:12.5px;color:#c4c4c4">\n</div>
<svg class="bx" style="left:700.5px;top:0" width="12" height="14" viewBox="0 0 12 14"><path d="M0 2.8H9.5M0 6.6H9.5M0 10.1H9.5" stroke="#b4b4b4" stroke-width="1.4" fill="none"/></svg>
<div class="bx" style="left:725px;top:0;width:1px;height:536px;background:#4a4a4a"></div>
<div class="tab" style="left:740.7px;top:-1px;color:#ececec">美化</div>
<div class="tab" style="left:792px;top:-1px">Raw</div>
<div class="tab" style="left:842.4px;top:-1px">Hex</div>
<div class="tab" style="left:889.5px;top:-1px">页面渲染</div>
<div class="bx" style="left:727.5px;top:17.5px;width:50.5px;height:2.5px;background:#cc6c3c"></div>
<div class="bx" style="left:726px;top:20px;width:725px;height:1px;background:#474747"></div>
<svg class="bx" style="left:1384.8px;top:-3px" width="19" height="19" viewBox="0 0 19 19"><rect x="0" y="0" width="18.4" height="18.3" rx="2.6" fill="#2b66ab"/><path d="M3.5 5.4H13.5" stroke="#d6ebff" stroke-width="1.3" fill="none"/><path d="M3.5 9.4H12.2a1.8 1.8 0 0 1 0 3.6H10.6" stroke="#d6ebff" stroke-width="1.4" fill="none"/><path d="M8.7 13l2.3-1.9v3.8z" fill="#d6ebff"/><path d="M3.5 13H7.3" stroke="#d6ebff" stroke-width="1.5" fill="none"/></svg>
<div class="tab" style="left:1415.0px;top:-3.5px;font-size:12.5px;color:#c4c4c4">\n</div>
<svg class="bx" style="left:1441.8px;top:0" width="12" height="14" viewBox="0 0 12 14"><path d="M0 2.8H9.5M0 6.6H9.5M0 10.1H9.5" stroke="#b4b4b4" stroke-width="1.4" fill="none"/></svg>
</body></html>
